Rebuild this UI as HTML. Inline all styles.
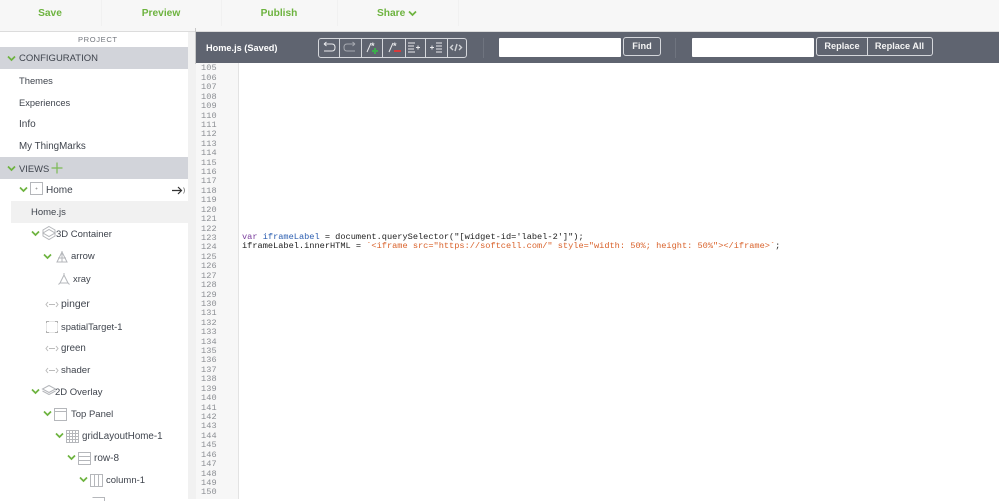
<!DOCTYPE html>
<html><head><meta charset="utf-8"><style>
html,body{margin:0;padding:0;width:999px;height:499px;overflow:hidden;background:#fff;font-family:"Liberation Sans",sans-serif;color:#3c424c}
.a{position:absolute}
#top{left:0;top:0;width:999px;height:31px;background:#f7f7f7;border-bottom:1px solid #dcdcdc}
.tb{position:absolute;top:0;height:26px;line-height:28px;font-size:10.2px;font-weight:bold;color:#6db33f;text-align:center}
.sep{position:absolute;top:0;height:26px;width:1px;background:#f1f1f1}
.l{position:absolute;font-size:9.6px;line-height:14px;white-space:nowrap;color:#3f444d}
.band{position:absolute;left:0;width:188px;height:22px;background:#d2d4da}
svg{position:absolute;overflow:visible}
.ch{fill:none;stroke:#6db33f;stroke-width:1.7}
.ic{fill:none;stroke:#b5b7bb;stroke-width:1}
#bar{left:196px;top:32px;width:803px;height:31px;background:#5f6470}
.btn{position:absolute;top:37px;height:17px;border:1px solid #d5d7dc;border-radius:3px;box-sizing:content-box;color:#f4f4f4;font-size:9.2px;font-weight:bold;line-height:17px;text-align:center}
.inp{position:absolute;top:38px;height:19px;background:#fff;border-radius:1px}
.w{fill:none;stroke:#e8e9eb;stroke-width:1}
pre{margin:0;position:absolute;font-family:"Liberation Mono",monospace}
</style></head><body>
<div class="a" id="top"></div>
<div class="tb" style="left:0;width:100px">Save</div>
<div class="tb" style="left:101px;width:120px">Preview</div>
<div class="tb" style="left:221px;width:116px">Publish</div>
<div class="tb" style="left:377px;text-align:left">Share</div>
<svg style="left:408px;top:10px" width="10" height="8"><path class="ch" d="M1 1.5 L4.5 5 L8 1.5"/></svg>
<div class="sep" style="left:101px"></div><div class="sep" style="left:221px"></div><div class="sep" style="left:337px"></div><div class="sep" style="left:458px"></div>

<!-- sidebar -->
<div class="a" style="left:188px;top:32px;width:8px;height:467px;background:#f1f1f1"></div>
<div class="a" style="left:195px;top:28px;width:1px;height:36px;background:#c8c8c8"></div>
<div class="l" style="left:78px;top:33px;font-size:7.6px;letter-spacing:.6px;color:#73777e">PROJECT</div>
<div class="band" style="top:47px"></div>
<svg style="left:7px;top:55px" width="10" height="8"><path class="ch" d="M1 1.5 L4.5 5 L8 1.5"/></svg>
<div class="l" style="left:19px;top:52px;font-size:9.5px">CONFIGURATION</div>
<div class="l" style="left:19px;top:74px;font-size:9.4px">Themes</div>
<div class="l" style="left:19px;top:96px;font-size:9.3px">Experiences</div>
<div class="l" style="left:19px;top:118px;font-size:10px">Info</div>
<div class="l" style="left:19px;top:140px;font-size:9.8px">My ThingMarks</div>
<div class="band" style="top:157px"></div>
<svg style="left:7px;top:165px" width="10" height="8"><path class="ch" d="M1 1.5 L4.5 5 L8 1.5"/></svg>
<div class="l" style="left:19px;top:162px;font-size:9.4px">VIEWS</div>
<svg style="left:51px;top:162px" width="12" height="12"><path d="M6 .5V11.5M.5 6H11.5" fill="none" stroke="#7cba55" stroke-width="1.2"/></svg>

<svg style="left:19px;top:186px" width="10" height="8"><path class="ch" d="M1 1.5 L4.5 5 L8 1.5"/></svg>
<svg style="left:30px;top:182px" width="14" height="14"><rect class="ic" x=".5" y=".5" width="12" height="12"/><path d="M6.5 5.5v2M5.5 6.5h2" stroke="#999" stroke-width=".7"/></svg>
<div class="l" style="left:46px;top:184px;font-size:10px">Home</div>
<svg style="left:171px;top:185px" width="15" height="11"><path d="M1 5.500H10M7 2 L10.500 5.500 L7 9" fill="none" stroke="#333" stroke-width="1.200"/><path d="M12.500 2.500 Q14.500 5.500 12.500 8.500" fill="none" stroke="#777" stroke-width=".8"/></svg>
<div class="a" style="left:11px;top:201px;width:177px;height:22px;background:#f1f1f1"></div>
<div class="l" style="left:31px;top:206px;font-size:9.5px">Home.js</div>

<svg style="left:31px;top:230px" width="10" height="8"><path class="ch" d="M1 1.5 L4.5 5 L8 1.5"/></svg>
<svg style="left:42px;top:226px" width="14" height="15"><path class="ic" d="M7 .5 L13 4 V10 L7 13.5 L1 10 V4 Z M1 7 L7 3.5 L13 7 L7 10.5 Z"/></svg>
<div class="l" style="left:56px;top:228px;font-size:9.5px">3D Container</div>
<svg style="left:43px;top:253px" width="10" height="8"><path class="ch" d="M1 1.5 L4.5 5 L8 1.5"/></svg>
<svg style="left:55px;top:250px" width="14" height="14"><path class="ic" d="M7 1 V12 M7 2 L2 12 H12 Z M3 8 H11"/></svg>
<div class="l" style="left:71px;top:250px;font-size:9.5px">arrow</div>
<svg style="left:57px;top:272px" width="14" height="14"><path class="ic" d="M7 3 L3 11 H11 Z M1.500 12.500 L3 11 M12.500 12.500 L11 11 M7 1 V3"/></svg>
<div class="l" style="left:73px;top:272px;font-size:9.400px">xray</div>

<svg style="left:45px;top:301px" width="14" height="7"><path d="M3 1 L1 3.500 L3 6 M11 1 L13 3.500 L11 6 M4 3.500 H10" fill="none" stroke="#bbb" stroke-width="1"/></svg>
<div class="l" style="left:61px;top:298px;font-size:10.4px">pinger</div>
<svg style="left:46px;top:321px" width="12" height="12"><path d="M.5 2.500V.5H2.500M9.500 .5H11.500V2.500M11.500 9.500V11.500H9.500M2.500 11.500H.5V9.500" fill="none" stroke="#999"/><rect x=".5" y=".5" width="11" height="11" fill="none" stroke="#ccc" stroke-dasharray="1 1"/></svg>
<div class="l" style="left:61px;top:320px;font-size:9.4px">spatialTarget-1</div>
<svg style="left:45px;top:345px" width="14" height="7"><path d="M3 1 L1 3.500 L3 6 M11 1 L13 3.500 L11 6 M4 3.500 H10" fill="none" stroke="#bbb" stroke-width="1"/></svg>
<div class="l" style="left:61px;top:342px;font-size:9.7px">green</div>
<svg style="left:45px;top:367px" width="14" height="7"><path d="M3 1 L1 3.500 L3 6 M11 1 L13 3.500 L11 6 M4 3.500 H10" fill="none" stroke="#bbb" stroke-width="1"/></svg>
<div class="l" style="left:61px;top:364px">shader</div>

<svg style="left:31px;top:388px" width="10" height="8"><path class="ch" d="M1 1.5 L4.5 5 L8 1.5"/></svg>
<svg style="left:42px;top:385px" width="14" height="11"><path class="ic" d="M7 .5 L13.500 4 L7 7.500 L.5 4 Z M.5 6 L7 9.500 L13.500 6"/></svg>
<div class="l" style="left:55px;top:386px;font-size:9.5px">2D Overlay</div>
<svg style="left:43px;top:410px" width="10" height="8"><path class="ch" d="M1 1.5 L4.5 5 L8 1.5"/></svg>
<svg style="left:54px;top:408px" width="14" height="14"><rect class="ic" x=".5" y=".5" width="12" height="12"/><path class="ic" d="M.5 3.500H12.500"/></svg>
<div class="l" style="left:71px;top:408px;font-size:9.5px">Top Panel</div>
<svg style="left:55px;top:432px" width="10" height="8"><path class="ch" d="M1 1.5 L4.5 5 L8 1.5"/></svg>
<svg style="left:66px;top:430px" width="14" height="14"><path class="ic" d="M.5 .5H12.500V12.500H.5ZM.5 3.500H12.500M.5 6.500H12.500M.5 9.500H12.500M3.500 .5V12.500M6.500 .5V12.500M9.500 .5V12.500"/></svg>
<div class="l" style="left:82px;top:430px;font-size:9.8px">gridLayoutHome-1</div>
<svg style="left:67px;top:454px" width="10" height="8"><path class="ch" d="M1 1.5 L4.5 5 L8 1.5"/></svg>
<svg style="left:78px;top:452px" width="14" height="14"><path class="ic" d="M.5 .5H12.500V12.500H.5ZM.5 4.500H12.500M.5 8.500H12.500"/></svg>
<div class="l" style="left:94px;top:452px;font-size:10px">row-8</div>
<svg style="left:79px;top:476px" width="10" height="8"><path class="ch" d="M1 1.5 L4.5 5 L8 1.5"/></svg>
<svg style="left:90px;top:474px" width="14" height="14"><path class="ic" d="M.5 .5H12.500V12.500H.5ZM4.500 .5V12.500M8.500 .5V12.500"/></svg>
<div class="l" style="left:106px;top:474px;font-size:9.5px">column-1</div>
<svg style="left:92px;top:497px" width="14" height="4"><path class="ic" d="M.5 .5H12.500V4"/></svg>

<!-- toolbar -->
<div class="a" id="bar"></div>
<div class="l" style="left:206px;top:41px;color:#fff;font-weight:bold;font-size:9.2px">Home.js (Saved)</div>
<div class="a" style="left:318px;top:38px;width:147px;height:18px;border:1px solid #d5d7dc;border-radius:3px"></div>
<svg style="left:318px;top:38px" width="150" height="20">
<path d="M21.500 0V19M43.500 0V19M64.500 0V19M87.500 0V19M107.500 0V19M129.500 0V19" stroke="#d5d7dc" fill="none"/>
<path class="w" d="M6 6H14Q17 6 17 9.500T14 13H6M6 6L8.500 4M6 6L8.500 8"/>
<path d="M37 6H29Q26 6 26 9.500T29 13H37M37 6L34.500 4M37 6L34.500 8" fill="none" stroke="#a5a8af"/>
<path class="w" d="M49 14L53 5"/><text x="53" y="11" font-size="9" font-weight="bold" fill="#e8e9eb" font-family="Liberation Sans">*</text><path d="M54 13H60M57 10V16" stroke="#3cae4c" stroke-width="2"/>
<path class="w" d="M71 14L75 5"/><text x="75" y="11" font-size="9" font-weight="bold" fill="#e8e9eb" font-family="Liberation Sans">*</text><path d="M76 13H83" stroke="#d63b3b" stroke-width="2"/>
<path class="w" d="M90 5H97M90 8H96M90 11H96M90 14H97M98 9.500H102M100 7.500V11.500" stroke-width="1.200"/>
<path class="w" d="M112 9.500H116M114 7.500V11.500M118 5H124M118 8H124M118 11H124M118 14H124" stroke-width="1.200"/>
<path d="M135 7L132.500 9.500L135 12M141 7L143.500 9.500L141 12M139 6L137 13" fill="none" stroke="#d0d2d6" stroke-width="1.400"/>
</svg>
<div class="a" style="left:483px;top:38px;width:1px;height:20px;background:#6f747f"></div>
<div class="inp" style="left:499px;width:122px"></div>
<div class="btn" style="left:623px;width:36px">Find</div>
<div class="a" style="left:675px;top:38px;width:1px;height:20px;background:#6f747f"></div>
<div class="inp" style="left:692px;width:122px"></div>
<div class="btn" style="left:816px;width:50px;border-radius:3px 0 0 3px">Replace</div>
<div class="btn" style="left:867px;width:65px;border-left:0;border-radius:0 3px 3px 0">Replace All</div>

<!-- editor -->
<div class="a" style="left:196px;top:63px;width:42px;height:436px;background:#f7f7f7;border-right:1px solid #e3e3e3"></div>
<pre style="left:201px;top:64.400px;font-size:8.600px;line-height:9.420px;color:#8c8f94;letter-spacing:.1px">105
106
107
108
109
110
111
112
113
114
115
116
117
118
119
120
121
122
123
124
125
126
127
128
129
130
131
132
133
134
135
136
137
138
139
140
141
142
143
144
145
146
147
148
149
150</pre>
<pre style="left:242px;top:233px;font-size:8.640px;line-height:9.420px;color:#222"><span style="color:#7a3e9d">var</span> <span style="color:#2a5db0">iframeLabel</span> = document.querySelector("[widget-id='label-2']");</pre>
<pre style="left:242px;top:242px;font-size:8.640px;line-height:9.420px;color:#222">iframeLabel.innerHTML = <span style="color:#d9622b">`&lt;iframe src="https://softcell.com/" style="width: 50%; height: 50%"&gt;&lt;/iframe&gt;`</span>;</pre>
</body></html>
